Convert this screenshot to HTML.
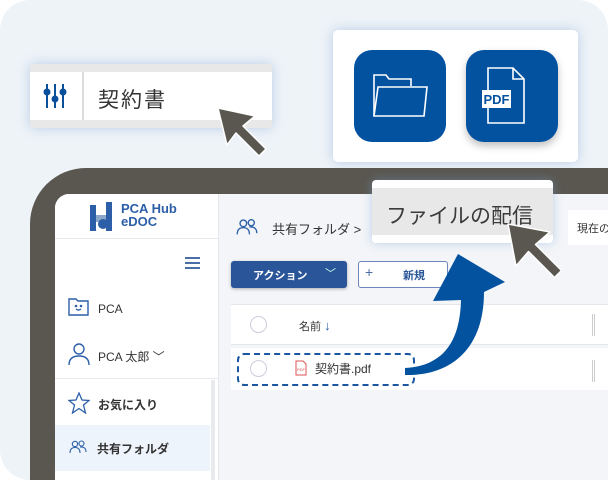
<!DOCTYPE html>
<html><head><meta charset="utf-8"><style>
*{margin:0;padding:0;box-sizing:border-box}
html,body{width:608px;height:480px;overflow:hidden}
body{background:#fff;font-family:"Liberation Sans","Noto Sans CJK JP",sans-serif;position:relative}
.wrap{position:absolute;left:0;top:0;width:608px;height:480px;overflow:hidden}
.bg{position:absolute;left:0;top:0;width:608px;height:480px;background:#eef3f8;border-radius:30px}
.abs{position:absolute}
.frame{position:absolute;left:30px;top:168px;width:578px;height:312px;background:#5a5750;border-radius:56px 0 0 0}
.screen{position:absolute;left:55px;top:194px;width:553px;height:286px;background:#f3f5f8;border-radius:14px 0 0 0;overflow:hidden}
.side{position:absolute;left:0;top:0;width:164px;height:286px;background:#fff;border-right:1px solid #e4e7ec}
.t{position:absolute;white-space:nowrap}
</style></head><body><div class="wrap">
<div class="bg"></div>
<div class="abs" style="left:30px;top:64px;width:242px;height:64px;background:#fff;border-radius:4px;box-shadow:0 0 12px rgba(120,160,210,.45);overflow:hidden">
 <div class="abs" style="left:0;top:0;width:242px;height:8px;background:#e8e8e8"></div>
 <div class="abs" style="left:0;top:56px;width:242px;height:8px;background:#e8e8e8"></div>
 <div class="abs" style="left:52px;top:8px;width:2px;height:48px;background:#ddd"></div>
 <svg class="abs" style="left:10px;top:18px" width="36" height="28" viewBox="0 0 36 28"><g stroke="#0a4f9c" stroke-width="2" fill="#0a4f9c"><line x1="7" y1="2" x2="7" y2="26"/><line x1="15" y1="2" x2="15" y2="26"/><line x1="23" y1="2" x2="23" y2="26"/><circle cx="7" cy="10" r="2.5"/><circle cx="15" cy="17" r="2.5"/><circle cx="23" cy="10" r="2.5"/></g></svg>
 <div class="t" style="left:68px;top:20px;font-size:21px;color:#333;letter-spacing:2px">契約書</div>
</div>
<div class="abs" style="left:333px;top:30px;width:245px;height:132px;background:#fff;border-radius:5px;box-shadow:0 0 12px rgba(120,160,210,.45)"></div>
<div class="abs" style="left:354px;top:50px;width:92px;height:92px;background:#0352a0;border-radius:18px"></div>
<div class="abs" style="left:466px;top:50px;width:92px;height:92px;background:#0352a0;border-radius:18px;box-shadow:0 4px 8px rgba(0,0,0,.25)"></div>
<svg class="abs" style="left:354px;top:50px" width="92" height="92" viewBox="0 0 92 92" fill="none" stroke="#fff" stroke-width="1.6"><path d="M20,66 L20,25 L32,25 L35,29 L57,29 L57,36"/><path d="M20,66 L24,37 L73,37 L70,66 Z"/></svg>
<svg class="abs" style="left:466px;top:50px" width="92" height="92" viewBox="0 0 92 92"><path d="M22,18 L47,18 L58,29 L58,73 L22,73 Z M47,18 L47,29 L58,29" fill="none" stroke="#fff" stroke-width="1.6"/><rect x="16" y="40" width="29" height="18" fill="#fff"/><text x="30.5" y="54" font-size="13" font-weight="bold" fill="#0352a0" text-anchor="middle" font-family="Liberation Sans">PDF</text></svg>
<div class="frame"></div>
<div class="screen">
 <div class="side">
  <svg class="abs" style="left:34px;top:8px" width="26" height="30" viewBox="0 0 26 30"><rect x="1" y="3" width="6" height="26" fill="#2c5fa8"/><rect x="17" y="0" width="6" height="29" fill="#2c5fa8"/><rect x="7" y="13" width="10" height="7" fill="#8aa6c8"/><circle cx="14" cy="22" r="5" fill="#2c5fa8"/></svg>
  <div class="t" style="left:66px;top:8px;font-size:13px;font-weight:bold;color:#2c5fa8;line-height:13px">PCA Hub<br>eDOC</div>
  <div class="abs" style="left:0;top:44px;width:164px;height:1px;background:#e6e8ec"></div>
  <div class="abs" style="left:130px;top:63px;width:15px;height:1.5px;background:#4a6fa5;box-shadow:0 5px 0 #4a6fa5,0 10px 0 #4a6fa5"></div>
  <svg class="abs" style="left:13px;top:103px" width="22" height="20" viewBox="0 0 22 20" fill="none" stroke="#2c5fa8" stroke-width="1.4"><path d="M1,2 L8,2 L10,4 L20,4 L20,18 L1,18 Z"/><path d="M8,12 Q10.5,14 13,12"/><circle cx="8" cy="9" r=".6"/><circle cx="13" cy="9" r=".6"/></svg>
  <div class="t" style="left:43px;top:108px;font-size:12px;color:#333">PCA</div>
  <svg class="abs" style="left:12px;top:148px" width="24" height="24" viewBox="0 0 24 24" fill="none" stroke="#2c5fa8" stroke-width="1.4"><circle cx="12" cy="7" r="5"/><path d="M2,23 Q2,14 12,14 Q22,14 22,23"/></svg>
  <div class="t" style="left:43px;top:154px;font-size:12px;color:#333">PCA 太郎 ﹀</div>
  <div class="abs" style="left:0;top:184px;width:164px;height:1px;background:#e6e8ec"></div>
  <div class="abs" style="left:156px;top:186px;width:4px;height:100px;background:#e8eaee"></div>
  <svg class="abs" style="left:13px;top:198px" width="22" height="22" viewBox="0 0 22 22" fill="none" stroke="#2c5fa8" stroke-width="1.3"><path d="M11,1 L14,8 L21,8.5 L15.5,13 L17.5,21 L11,16.5 L4.5,21 L6.5,13 L1,8.5 L8,8 Z"/></svg>
  <div class="t" style="left:43px;top:202px;font-size:12px;font-weight:bold;color:#333">お気に入り</div>
  <div class="abs" style="left:0;top:231px;width:155px;height:46px;background:#eef4fc"></div>
  <svg class="abs" style="left:14px;top:246px" width="18" height="14" viewBox="0 0 18 14" fill="none" stroke="#2c5fa8" stroke-width="1.1"><circle cx="6" cy="4" r="2.7"/><circle cx="12.5" cy="3.5" r="2.5"/><path d="M1,13 Q1,7.5 6,7.5 Q11,7.5 11,13"/><path d="M11,7 Q17,6.5 17,12"/></svg>
  <div class="t" style="left:42px;top:246px;font-size:12px;font-weight:bold;color:#333">共有フォルダ</div>
 </div>
 <svg class="abs" style="left:181px;top:24px" width="22" height="18" viewBox="0 0 18 14" fill="none" stroke="#2c5fa8" stroke-width="1.1"><circle cx="6" cy="4" r="2.7"/><circle cx="12.5" cy="3.5" r="2.5"/><path d="M1,13 Q1,7.5 6,7.5 Q11,7.5 11,13"/><path d="M11,7 Q17,6.5 17,12"/></svg>
 <div class="t" style="left:217px;top:25px;font-size:13px;color:#333">共有フォルダ &gt;</div>
 <div class="abs" style="left:176px;top:67px;width:116px;height:27px;background:#2a5599;border-radius:3px;box-shadow:0 1px 3px rgba(0,0,0,.3)"></div>
 <div class="t" style="left:198px;top:73px;font-size:11px;font-weight:bold;color:#fff">アクション</div>
 <div class="t" style="left:270px;top:71px;font-size:11px;color:#cfe;">﹀</div>
 <div class="abs" style="left:303px;top:67px;width:90px;height:27px;background:#fff;border:1px solid #6b86b8;border-radius:3px"></div>
 <div class="t" style="left:310px;top:70px;font-size:14px;color:#4a6fa5">+</div>
 <div class="t" style="left:348px;top:73px;font-size:11px;font-weight:bold;color:#2a5599">新規</div>
 <div class="abs" style="left:176px;top:110px;width:400px;height:41px;background:#fff;border-top:1px solid #e4e7ec;border-bottom:1px solid #e4e7ec"></div>
 <div class="abs" style="left:195px;top:122px;width:17px;height:17px;border:1px solid #ccd;border-radius:50%"></div>
 <div class="t" style="left:244px;top:124px;font-size:11px;color:#333">名前 <span style="color:#2c5fa8;font-size:13px">↓</span></div>
 <div class="abs" style="left:537px;top:120px;width:3px;height:22px;border-left:1px solid #ccc;border-right:1px solid #ccc"></div>
 <div class="abs" style="left:176px;top:154px;width:400px;height:42px;background:#fff"></div>
 <div class="abs" style="left:537px;top:166px;width:3px;height:22px;border-left:1px solid #ccc;border-right:1px solid #ccc"></div>
 <div class="abs" style="left:182px;top:159px;width:178px;height:33px;border:2px dashed #1b56a0;border-radius:7px"></div>
 <div class="abs" style="left:195px;top:166px;width:17px;height:17px;border:1px solid #ccd;border-radius:50%"></div>
 <svg class="abs" style="left:240px;top:166px" width="12" height="16" viewBox="0 0 12 16"><path d="M1,1 L8,1 L11,4 L11,15 L1,15 Z" fill="#fff" stroke="#d55" stroke-width="1"/><text x="6" y="11" font-size="4" fill="#d55" text-anchor="middle">PDF</text></svg>
 <div class="t" style="left:260px;top:166px;font-size:12px;color:#333">契約書.pdf</div>
</div>
<div class="abs" style="left:372px;top:180px;width:181px;height:63px;background:#fff;border-radius:4px;box-shadow:0 0 10px rgba(120,160,210,.45)"><div class="abs" style="left:0;top:8px;width:181px;height:47px;background:#e8e8e8"></div></div>
<div class="t" style="left:386px;top:200px;font-size:21px;color:#3a3a3a">ファイルの配信</div>
<div class="abs" style="left:568px;top:210px;width:40px;height:35px;background:#fff"></div>
<div class="t" style="left:577px;top:220px;font-size:11px;color:#333">現在の</div>
<svg class="abs" style="left:0;top:0" width="608" height="480" viewBox="0 0 608 480">
<path d="M405,368 C443,366 460,342 461,300 L433,301 L458,254 L505,282 L484,292 C484,348 452,376 405,375 Z" fill="#0352a0"/>
<path d="M508,224 L550,232 L535.5,244.5 L561.5,270.5 L554.5,277.5 L528.5,251.5 L516,266 Z" fill="#5a5750" stroke="#fff" stroke-width="1.5" stroke-linejoin="round"/>
<path d="M218,108 L255,116 L243,126 L266,149 L259,156 L236,133 L227,145 Z" fill="#5a5750" stroke="#fff" stroke-width="1.5" stroke-linejoin="round"/>
</svg>
</div></body></html>
